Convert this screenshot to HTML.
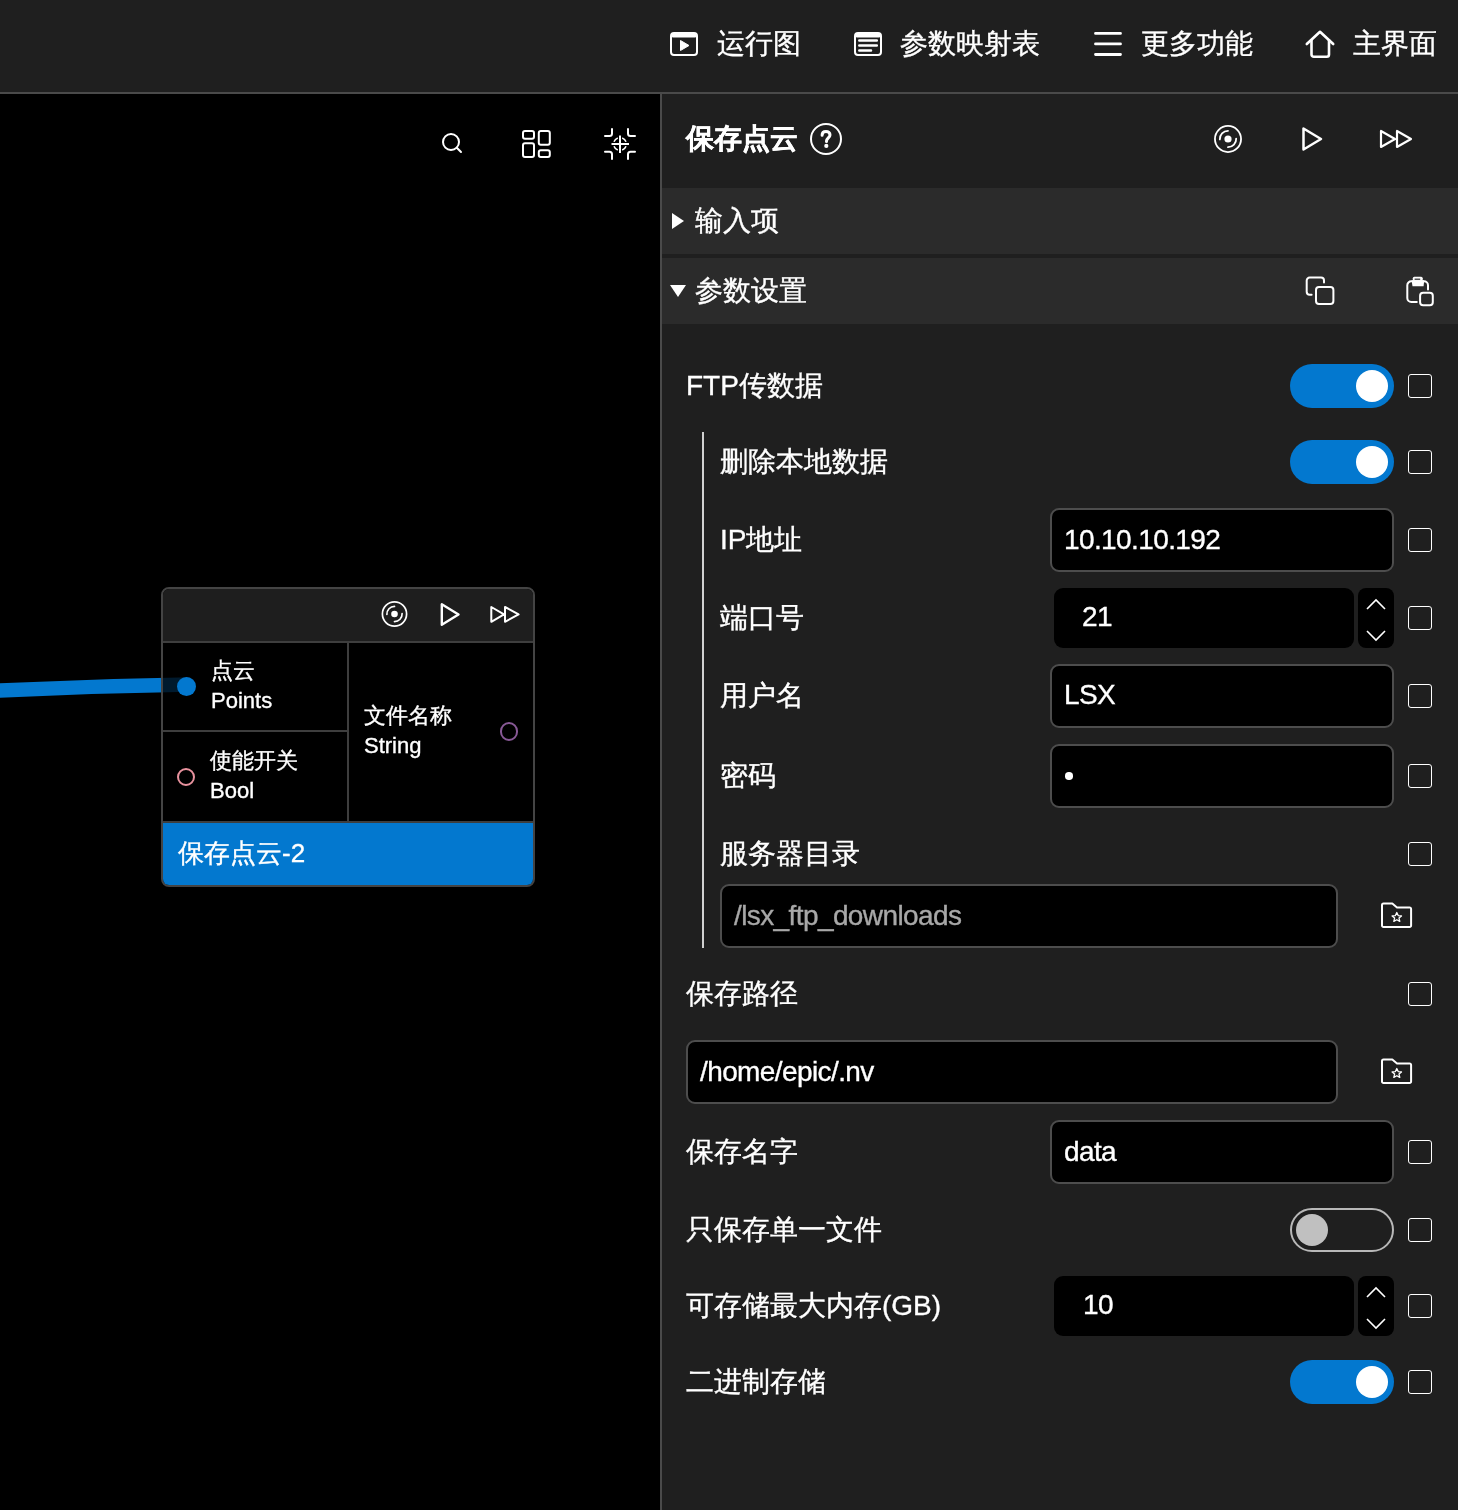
<!DOCTYPE html>
<html><head><meta charset="utf-8">
<style>
*{box-sizing:border-box;margin:0;padding:0}
html,body{width:1458px;height:1510px;overflow:hidden;background:#000}
body{position:relative;font-family:"Liberation Sans",sans-serif;color:#fff}
.t,.nt{will-change:transform;-webkit-text-stroke:0.35px #fff}
.v{letter-spacing:-0.6px}
.a{position:absolute}
.t{position:absolute;font-size:28px;line-height:40px;height:40px;white-space:nowrap;color:#fff}
svg{position:absolute;overflow:visible}
.cb{position:absolute;left:1408px;width:24px;height:24px;border:1.7px solid #fff;border-radius:3px}
.inp{position:absolute;background:#000;border:2px solid #4d4d4d;border-radius:9px}
.num{position:absolute;background:#000;border-radius:9px}
.tog{position:absolute;left:1290px;width:104px;height:44px;border-radius:22px;background:#0378cf}
.tog .k{position:absolute;right:6px;top:6px;width:32px;height:32px;border-radius:50%;background:#fff}
.togoff{position:absolute;left:1290px;width:104px;height:44px;border-radius:22px;border:2px solid #b8b8b8;background:#1f1f1f}
.togoff .k{position:absolute;left:4px;top:4px;width:32px;height:32px;border-radius:50%;background:#c0c0c0}
.nt{position:absolute;font-size:22px;line-height:30px;height:30px;white-space:nowrap;color:#fff}
</style></head><body>

<!-- top bar -->
<div class="a" style="left:0;top:0;width:1458px;height:92px;background:#1f1f1f"></div>
<div class="a" style="left:0;top:92px;width:1458px;height:2px;background:#4a4a4a"></div>

<svg style="left:670px;top:32px" width="28" height="24" viewBox="0 0 28 24">
  <rect x="1" y="1" width="26" height="22" rx="3" fill="none" stroke="#fff" stroke-width="2"/>
  <rect x="1" y="1" width="26" height="4.6" rx="2" fill="#fff"/>
  <path d="M10.5 8.5 L19 13.5 L10.5 18.5 Z" fill="#fff" stroke="#fff" stroke-width="1" stroke-linejoin="round"/>
</svg>
<div class="t" style="left:717px;top:24px">运行图</div>

<svg style="left:854px;top:32px" width="28" height="24" viewBox="0 0 28 24">
  <rect x="1" y="1" width="26" height="22" rx="3" fill="none" stroke="#fff" stroke-width="2"/>
  <rect x="1" y="1" width="26" height="4.6" rx="2" fill="#fff"/>
  <path d="M5.3 8.5 H22.8 M5.3 13.6 H22.8 M5.3 18.5 H17" stroke="#fff" stroke-width="2.5" stroke-linecap="round"/>
</svg>
<div class="t" style="left:900px;top:24px">参数映射表</div>

<svg style="left:1094px;top:30px" width="28" height="28" viewBox="0 0 28 28">
  <path d="M1.5 3.4 H26.5 M1.5 13.9 H26.5 M1.5 24.5 H26.5" stroke="#fff" stroke-width="2.8" stroke-linecap="round"/>
</svg>
<div class="t" style="left:1141px;top:24px">更多功能</div>

<svg style="left:1305px;top:30px" width="30" height="28" viewBox="0 0 30 28">
  <path d="M1.8 14 L15 1.8 L28.2 14" fill="none" stroke="#fff" stroke-width="2.6" stroke-linecap="round" stroke-linejoin="round"/>
  <path d="M6.5 9.5 V24.5 a2.3 2.3 0 0 0 2.3 2.3 H21.7 a2.3 2.3 0 0 0 2.3 -2.3 V9.5" fill="none" stroke="#fff" stroke-width="2.6"/>
</svg>
<div class="t" style="left:1353px;top:24px">主界面</div>

<!-- canvas -->
<div class="a" style="left:0;top:94px;width:660px;height:1416px;background:#000"></div>

<svg style="left:440px;top:131px" width="24" height="24" viewBox="0 0 24 24">
  <circle cx="11" cy="11" r="8" fill="none" stroke="#fff" stroke-width="2"/>
  <path d="M16.8 16.8 L21 21" stroke="#fff" stroke-width="2" stroke-linecap="round"/>
</svg>
<svg style="left:520px;top:128px" width="32" height="32" viewBox="0 0 32 32">
  <rect x="3" y="3" width="11" height="7.7" rx="2" fill="none" stroke="#fff" stroke-width="2"/>
  <rect x="3" y="15.2" width="11" height="13.8" rx="2" fill="none" stroke="#fff" stroke-width="2"/>
  <rect x="18.8" y="3" width="11" height="13.8" rx="2" fill="none" stroke="#fff" stroke-width="2"/>
  <rect x="18.8" y="22.2" width="11" height="6.8" rx="2" fill="none" stroke="#fff" stroke-width="2"/>
</svg>
<svg style="left:602px;top:126px" width="36" height="36" viewBox="0 0 36 36">
  <path d="M3 9.9 H7.5 a2.5 2.5 0 0 0 2.5 -2.5 V3 M26 3 V7.4 a2.5 2.5 0 0 0 2.5 2.5 H33 M3 25.8 H7.5 a2.5 2.5 0 0 1 2.5 2.5 V33 M26 33 V28.3 a2.5 2.5 0 0 1 2.5 -2.5 H33" fill="none" stroke="#fff" stroke-width="2" stroke-linecap="round"/>
  <path d="M18 9.5 V27 M9.5 18 H27" stroke="#fff" stroke-width="2"/>
  <path d="M24.01 20.19 A6.4 6.4 0 0 1 20.19 24.01 M15.81 24.01 A6.4 6.4 0 0 1 11.99 20.19 M11.99 15.81 A6.4 6.4 0 0 1 15.81 11.99 M20.19 11.99 A6.4 6.4 0 0 1 24.01 15.81" fill="none" stroke="#fff" stroke-width="1.6"/>
</svg>

<!-- connection curve -->
<svg style="left:0;top:0" width="660" height="1510" viewBox="0 0 660 1510">
  <path d="M-30 692.1 Q 80 686.2 190 684.6" fill="none" stroke="#0378cf" stroke-width="14.5"/>
</svg>

<!-- node -->
<div class="a" style="left:161px;top:587px;width:374px;height:300px;border:2px solid #444;border-radius:8px;background:rgba(0,0,0,0.78);overflow:hidden">
  <div class="a" style="left:0;top:0;width:370px;height:54px;background:#1e1e1e;border-bottom:2px solid #3e3e3e"></div>
  <div class="a" style="left:184px;top:54px;width:2px;height:180px;background:#3e3e3e"></div>
  <div class="a" style="left:0;top:141px;width:184px;height:2px;background:#3e3e3e"></div>
  <div class="a" style="left:0;top:232px;width:370px;height:66px;background:#0378cf;border-top:2px solid #3e3e3e"></div>
</div>
<svg style="left:380px;top:600px" width="28" height="28" viewBox="0 0 28 28">
  <circle cx="14.5" cy="14" r="12.1" fill="none" stroke="#fff" stroke-width="1.7"/>
  <circle cx="14.5" cy="14" r="3.3" fill="#fff"/>
  <path d="M6.9 14.4 A7.6 7.6 0 0 1 14.5 6.4 M22.1 13.6 A7.6 7.6 0 0 1 14.5 21.6" fill="none" stroke="#fff" stroke-width="1.7" stroke-linecap="round"/>
</svg>
<svg style="left:438px;top:600px" width="24" height="28" viewBox="0 0 24 28">
  <path d="M3.8 4.3 V24.7 L20.5 14.5 Z" fill="none" stroke="#fff" stroke-width="2.4" stroke-linejoin="round"/>
</svg>
<svg style="left:488px;top:603px" width="34" height="22" viewBox="0 0 34 22">
  <path d="M3.3 4 V18.8 L16 11.4 Z M17 4 V18.8 L30.6 11.4 Z" fill="none" stroke="#fff" stroke-width="2" stroke-linejoin="round"/>
</svg>
<div class="nt" style="left:211px;top:656px">点云</div>
<div class="nt" style="left:211px;top:686px">Points</div>
<div class="nt" style="left:210px;top:746px">使能开关</div>
<div class="nt" style="left:210px;top:776px">Bool</div>
<div class="nt" style="left:364px;top:701px">文件名称</div>
<div class="nt" style="left:364px;top:731px">String</div>
<div class="a" style="left:176.5px;top:676.5px;width:19px;height:19px;border-radius:50%;background:#0378cf"></div>
<div class="a" style="left:177.1px;top:767.6px;width:18px;height:18px;border-radius:50%;border:2px solid #e8929e"></div>
<div class="a" style="left:499.8px;top:722.3px;width:18.4px;height:18.4px;border-radius:50%;border:2px solid #885996"></div>
<div class="a" style="left:178px;top:835px;font-size:26px;line-height:36px;white-space:nowrap;will-change:transform;-webkit-text-stroke:0.35px #fff">保存点云-2</div>

<!-- divider & panel -->
<div class="a" style="left:660px;top:94px;width:2px;height:1416px;background:#4a4a4a"></div>
<div class="a" style="left:662px;top:94px;width:796px;height:1416px;background:#1f1f1f"></div>

<div class="t" style="left:686px;top:119px;font-weight:bold">保存点云</div>
<svg style="left:808px;top:121px" width="36" height="36" viewBox="0 0 36 36">
  <circle cx="18" cy="18" r="15" fill="none" stroke="#fff" stroke-width="2"/>
  <path d="M14.1 14.3 C14.1 11.7 15.9 10.4 18 10.4 C20.4 10.4 22 11.9 22 13.9 C22 16.7 18.5 17.1 18.5 20.1 V20.5" fill="none" stroke="#fff" stroke-width="3" stroke-linecap="round"/>
  <circle cx="18.3" cy="24.9" r="2.1" fill="#fff"/>
</svg>

<svg style="left:1212px;top:123px" width="32" height="32" viewBox="0 0 32 32">
  <circle cx="16" cy="16" r="13.05" fill="none" stroke="#fff" stroke-width="1.8"/>
  <circle cx="16" cy="16" r="3.6" fill="#fff"/>
  <path d="M7.81 16.43 A8.2 8.2 0 0 1 16 7.8 M24.19 15.57 A8.2 8.2 0 0 1 16 24.2" fill="none" stroke="#fff" stroke-width="1.8" stroke-linecap="round"/>
</svg>
<svg style="left:1298px;top:123px" width="28" height="32" viewBox="0 0 28 32">
  <path d="M5.5 5.5 V26.5 L23 16 Z" fill="none" stroke="#fff" stroke-width="2.5" stroke-linejoin="round"/>
</svg>
<svg style="left:1376px;top:125px" width="40" height="28" viewBox="0 0 40 28">
  <path d="M5 6 V22 L19 14 Z M21 6 V22 L35 14 Z" fill="none" stroke="#fff" stroke-width="2.2" stroke-linejoin="round"/>
</svg>

<!-- sections -->
<div class="a" style="left:662px;top:188px;width:796px;height:66px;background:#2b2b2b"></div>
<div class="a" style="left:662px;top:258px;width:796px;height:66px;background:#2b2b2b"></div>
<svg style="left:670px;top:211px" width="18" height="20" viewBox="0 0 18 20">
  <path d="M2 2 L14 10 L2 18 Z" fill="#fff"/>
</svg>
<div class="t" style="left:695px;top:201px">输入项</div>
<svg style="left:668px;top:282px" width="20" height="18" viewBox="0 0 20 18">
  <path d="M2 3 L18 3 L10 15 Z" fill="#fff"/>
</svg>
<div class="t" style="left:695px;top:271px">参数设置</div>
<svg style="left:1302px;top:273px" width="36" height="36" viewBox="0 0 36 36">
  <path d="M22 9.5 V7.6 a3 3 0 0 0 -3 -3 H7.7 a3 3 0 0 0 -3 3 V18.8 a3 3 0 0 0 3 3 H9.6" fill="none" stroke="#fff" stroke-width="2" stroke-linecap="round"/>
  <rect x="14" y="14" width="17.4" height="17" rx="3" fill="none" stroke="#fff" stroke-width="2"/>
</svg>
<svg style="left:1402px;top:273px" width="36" height="36" viewBox="0 0 36 36">
  <path d="M26 16.6 V12.3 a4 4 0 0 0 -4 -4 H9.3 a4 4 0 0 0 -4 4 V24.9 a4 4 0 0 0 4 4 H14.8" fill="none" stroke="#fff" stroke-width="2" stroke-linecap="round"/>
  <rect x="10.8" y="3.8" width="9.9" height="4" rx="1.5" fill="#fff"/>
  <path d="M9.6 7.3 H22.2 L21.6 13.2 H10.5 Z" fill="#fff"/>
  <rect x="12.6" y="5.6" width="5.6" height="1.2" fill="#2b2b2b"/>
  <rect x="18.1" y="19.8" width="12.7" height="12.5" rx="3" fill="none" stroke="#fff" stroke-width="2"/>
</svg>

<!-- rows -->
<div class="t" style="left:686px;top:366px">FTP传数据</div>
<div class="tog" style="top:364px"><div class="k"></div></div>
<div class="cb" style="top:374px"></div>

<div class="a" style="left:702px;top:432px;width:2px;height:516px;background:#d0d0d0"></div>

<div class="t" style="left:720px;top:442px">删除本地数据</div>
<div class="tog" style="top:440px"><div class="k"></div></div>
<div class="cb" style="top:450px"></div>

<div class="t" style="left:720px;top:520px">IP地址</div>
<div class="inp" style="left:1050px;top:508px;width:344px;height:64px"></div>
<div class="t v" style="left:1064px;top:520px">10.10.10.192</div>
<div class="cb" style="top:528px"></div>

<div class="t" style="left:720px;top:598px">端口号</div>
<div class="num" style="left:1054px;top:588px;width:300px;height:60px"></div>
<div class="num" style="left:1358px;top:588px;width:36px;height:60px;border-radius:8px"></div>
<svg style="left:1358px;top:588px" width="36" height="60" viewBox="0 0 36 60">
  <path d="M9 21 L18 12 L27 21 M9 43 L18 52 L27 43" fill="none" stroke="#fff" stroke-width="1.6"/>
</svg>
<div class="t v" style="left:1082px;top:597px">21</div>
<div class="cb" style="top:606px"></div>

<div class="t" style="left:720px;top:676px">用户名</div>
<div class="inp" style="left:1050px;top:664px;width:344px;height:64px"></div>
<div class="t v" style="left:1064px;top:675px">LSX</div>
<div class="cb" style="top:684px"></div>

<div class="t" style="left:720px;top:756px">密码</div>
<div class="inp" style="left:1050px;top:744px;width:344px;height:64px"></div>
<div class="a" style="left:1065px;top:772px;width:7.5px;height:7.5px;border-radius:50%;background:#fff"></div>
<div class="cb" style="top:764px"></div>

<div class="t" style="left:720px;top:834px">服务器目录</div>
<div class="cb" style="top:842px"></div>
<div class="inp" style="left:720px;top:884px;width:618px;height:64px"></div>
<div class="t v" style="left:734px;top:896px;color:#a8a8a8;-webkit-text-stroke-color:#a8a8a8">/lsx_ftp_downloads</div>
<svg style="left:1379px;top:900px" width="36" height="32" viewBox="0 0 36 32">
  <path d="M3 5 a1.5 1.5 0 0 1 1.5 -1.5 H13.3 L18 7.4 H30.6 a1.5 1.5 0 0 1 1.5 1.5 V25.6 a1.5 1.5 0 0 1 -1.5 1.5 H4.5 a1.5 1.5 0 0 1 -1.5 -1.5 Z" fill="none" stroke="#fff" stroke-width="2" stroke-linejoin="round"/>
  <path d="M17.8 12.5 L19.2 15.6 L22.5 15.9 L20 18.1 L20.8 21.4 L17.8 19.7 L14.8 21.4 L15.6 18.1 L13.1 15.9 L16.4 15.6 Z" fill="none" stroke="#fff" stroke-width="1.3" stroke-linejoin="round"/>
</svg>

<div class="t" style="left:686px;top:974px">保存路径</div>
<div class="cb" style="top:982px"></div>
<div class="inp" style="left:686px;top:1040px;width:652px;height:64px"></div>
<div class="t v" style="left:700px;top:1052px">/home/epic/.nv</div>
<svg style="left:1379px;top:1056px" width="36" height="32" viewBox="0 0 36 32">
  <path d="M3 5 a1.5 1.5 0 0 1 1.5 -1.5 H13.3 L18 7.4 H30.6 a1.5 1.5 0 0 1 1.5 1.5 V25.6 a1.5 1.5 0 0 1 -1.5 1.5 H4.5 a1.5 1.5 0 0 1 -1.5 -1.5 Z" fill="none" stroke="#fff" stroke-width="2" stroke-linejoin="round"/>
  <path d="M17.8 12.5 L19.2 15.6 L22.5 15.9 L20 18.1 L20.8 21.4 L17.8 19.7 L14.8 21.4 L15.6 18.1 L13.1 15.9 L16.4 15.6 Z" fill="none" stroke="#fff" stroke-width="1.3" stroke-linejoin="round"/>
</svg>

<div class="t" style="left:686px;top:1132px">保存名字</div>
<div class="inp" style="left:1050px;top:1120px;width:344px;height:64px"></div>
<div class="t v" style="left:1064px;top:1132px">data</div>
<div class="cb" style="top:1140px"></div>

<div class="t" style="left:686px;top:1210px">只保存单一文件</div>
<div class="togoff" style="top:1208px"><div class="k"></div></div>
<div class="cb" style="top:1218px"></div>

<div class="t" style="left:686px;top:1286px">可存储最大内存(GB)</div>
<div class="num" style="left:1054px;top:1276px;width:300px;height:60px"></div>
<div class="num" style="left:1358px;top:1276px;width:36px;height:60px;border-radius:8px"></div>
<svg style="left:1358px;top:1276px" width="36" height="60" viewBox="0 0 36 60">
  <path d="M9 21 L18 12 L27 21 M9 43 L18 52 L27 43" fill="none" stroke="#fff" stroke-width="1.6"/>
</svg>
<div class="t v" style="left:1082.5px;top:1285px">10</div>
<div class="cb" style="top:1294px"></div>

<div class="t" style="left:686px;top:1362px">二进制存储</div>
<div class="tog" style="top:1360px"><div class="k"></div></div>
<div class="cb" style="top:1370px"></div>

</body></html>
